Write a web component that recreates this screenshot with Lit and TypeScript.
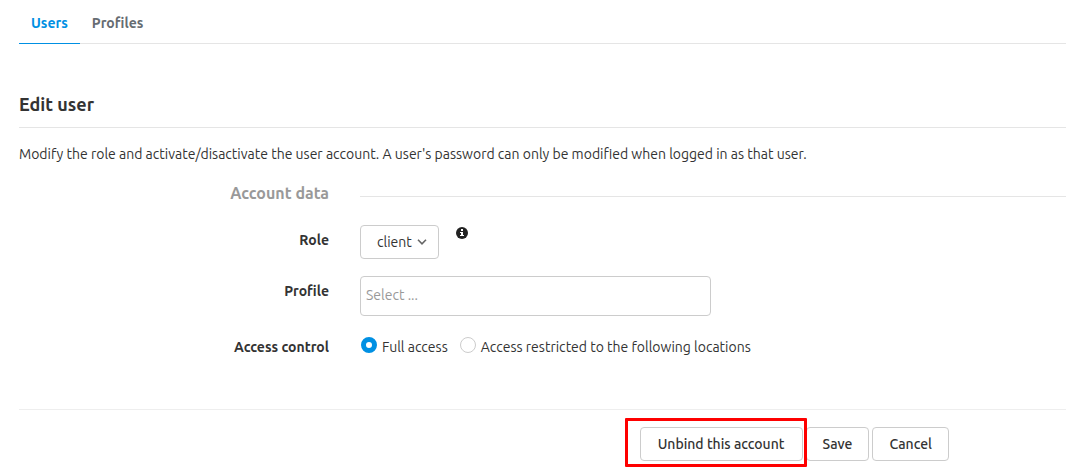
import { LitElement, html, css } from "lit";
import { customElement, state } from "lit/decorators.js";

@customElement("app-root")
export class AppRoot extends LitElement {
  static styles = css`
    :host {
      display: block;
      background: #fff;
      color: #333;
      font: 14px/20px Ubuntu, "Noto Sans", sans-serif;
    }
    * {
      box-sizing: border-box;
    }
    .page {
      padding-left: 19px;
    }
    .tabs {
      display: flex;
      border-bottom: 1px solid #e5e5e5;
    }
    .tab {
      padding: 13px 12px 10px;
      margin-bottom: -1px;
      border-bottom: 1px solid transparent;
      color: #666c72;
      font-weight: 700;
      text-decoration: none;
    }
    .tab.active {
      color: #0090e3;
      border-bottom-color: #0090e3;
    }
    .title {
      margin: 48px 0 0;
      padding-bottom: 11px;
      border-bottom: 1px solid #e5e5e5;
      font-size: 18px;
      line-height: 24px;
      font-weight: 700;
    }
    .intro {
      margin: 16px 0 0;
    }
    .form {
      display: grid;
      grid-template-columns: 310px 1fr;
      column-gap: 31px;
    }
    .section {
      margin: 19px 0 0;
      color: #999;
      font-size: 16px;
      line-height: 20px;
      font-weight: 700;
      text-align: right;
    }
    .rule {
      align-self: end;
      margin-bottom: 6px;
      border-top: 1px solid #e5e5e5;
    }
    .label {
      font-weight: 700;
      text-align: right;
    }
    .label.role {
      margin-top: 27px;
    }
    .label.profile {
      margin-top: 22px;
    }
    .label.access {
      margin-top: 21px;
    }
    .role-field {
      display: flex;
      align-items: flex-start;
      gap: 17px;
      margin-top: 22px;
    }
    .select {
      display: grid;
      align-items: center;
    }
    .select select {
      grid-area: 1 / 1;
      appearance: none;
      width: 79px;
      height: 34px;
      padding: 0 16px;
      border: 1px solid #ccc;
      border-radius: 4px;
      background: #fff;
      color: #333;
      font: inherit;
    }
    .chevron {
      grid-area: 1 / 1;
      justify-self: end;
      margin-right: 12px;
      pointer-events: none;
    }
    .info {
      display: block;
      margin-top: 2px;
    }
    .profile-input {
      display: block;
      width: 351px;
      max-width: 100%;
      height: 40px;
      margin-top: 17px;
      padding: 0 5px 3px;
      border: 1px solid #ccc;
      border-radius: 4px;
      color: #333;
      font: inherit;
    }
    .profile-input::placeholder {
      color: #999;
      opacity: 1;
    }
    .radios {
      display: flex;
      flex-wrap: wrap;
      gap: 12px;
      margin-top: 21px;
      padding-left: 1px;
    }
    .radio {
      display: flex;
      gap: 5px;
    }
    .radio input {
      appearance: none;
      width: 16px;
      height: 16px;
      margin: 0;
      border: 1px solid #ccc;
      border-radius: 50%;
      background: #fff;
    }
    .radio input:checked {
      border: 5px solid #0090e3;
    }
    .actions {
      display: flex;
      justify-content: flex-end;
      gap: 3px;
      margin-top: 52px;
      padding: 17px 117px 11px 0;
      border-top: 1px solid #eee;
    }
    .button {
      height: 34px;
      padding: 0 16px;
      border: 1px solid #ccc;
      border-radius: 4px;
      background: #fff;
      color: #333;
      font: inherit;
      font-weight: 500;
      white-space: nowrap;
    }
    .marked {
      position: relative;
      min-width: 163px;
    }
    .marked::after {
      content: "";
      position: absolute;
      inset: -10px -5px -7px -16px;
      border: 3px solid #fe0000;
      border-radius: 1px;
      pointer-events: none;
    }
  `;

  @state() private access = "full";

  private radio(value: string, text: string) {
    return html`<label class="radio">
      <input
        type="radio"
        name="access"
        value=${value}
        .checked=${this.access === value}
        @change=${() => (this.access = value)}
      />
      <span>${text}</span>
    </label>`;
  }

  render() {
    return html`<div class="page">
      <nav class="tabs">
        <a class="tab active" href="#users">Users</a>
        <a class="tab" href="#profiles">Profiles</a>
      </nav>
      <h1 class="title">Edit user</h1>
      <p class="intro">
        Modify the role and activate/disactivate the user account. A user's
        password can only be modified when logged in as that user.
      </p>
      <form @submit=${(e: Event) => e.preventDefault()}>
        <div class="form">
          <h2 class="section">Account data</h2>
          <div class="rule"></div>

          <label class="label role" for="role">Role</label>
          <div class="role-field">
            <div class="select">
              <select id="role">
                <option>client</option>
              </select>
              <svg class="chevron" width="10" height="6" viewBox="0 0 10 6">
                <path
                  d="M1 .8 5 4.800 9 .8"
                  fill="none"
                  stroke="#666"
                  stroke-width="1.6"
                />
              </svg>
            </div>
            <svg class="info" width="12" height="12" viewBox="0 0 12 12">
              <circle cx="6" cy="6" r="6" fill="#222" />
              <path d="M5 2h2v2H5zM4 5h3v3h1v1H4V8h1V6H4z" fill="#fff" />
            </svg>
          </div>

          <label class="label profile" for="profile">Profile</label>
          <input
            class="profile-input"
            id="profile"
            type="text"
            placeholder="Select ..."
          />

          <span class="label access" id="access-label">Access control</span>
          <div class="radios" role="radiogroup" aria-labelledby="access-label">
            ${this.radio("full", "Full access")}
            ${this.radio("restricted", "Access restricted to the following locations")}
          </div>
        </div>
        <div class="actions">
          <button class="button marked" type="button">Unbind this account</button>
          <button class="button" type="submit">Save</button>
          <button class="button" type="button">Cancel</button>
        </div>
      </form>
    </div>`;
  }
}
